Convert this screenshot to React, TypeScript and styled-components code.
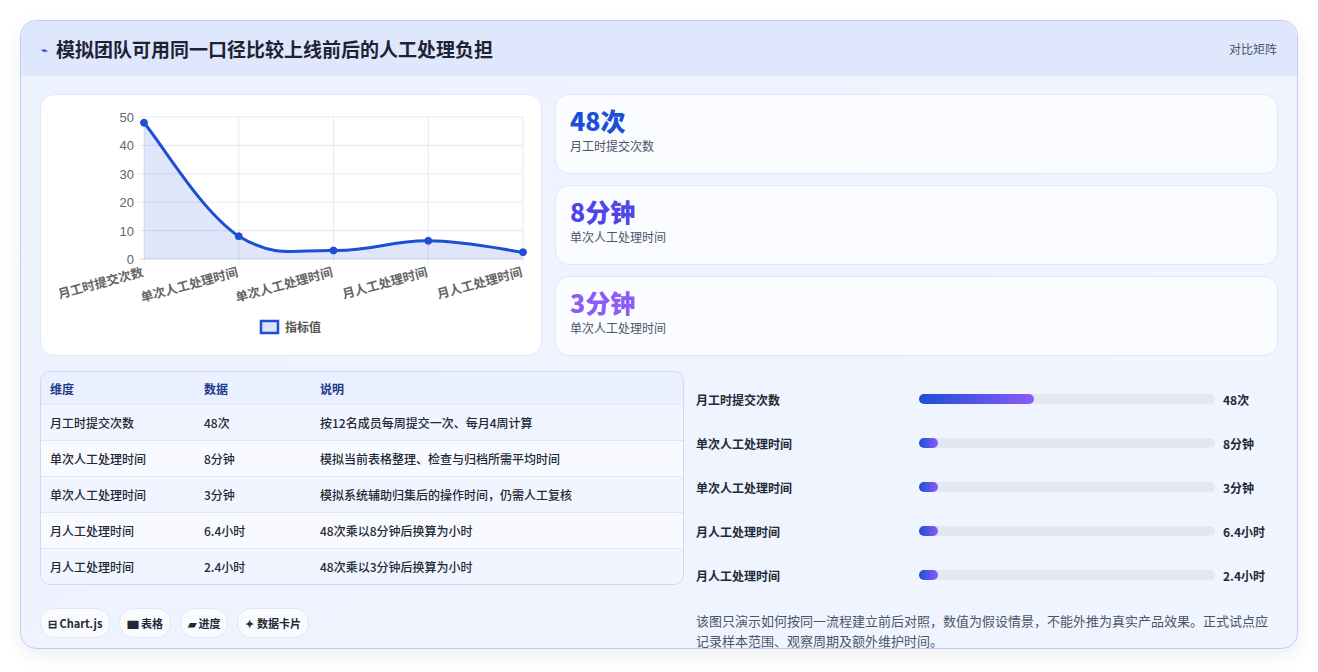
import React from 'react';
import styled, { createGlobalStyle } from 'styled-components';

const Global = createGlobalStyle`
  body { margin: 0; background: #fff; font-family: "Noto Sans CJK SC", "Noto Sans", sans-serif; }
`;

const Page = styled.div`
  padding: 20px 20px 21px 20px;
`;

const Card = styled.div`
  border: 1px solid #c3cdf3;
  border-radius: 16px;
  background: linear-gradient(135deg, #edf2ff 0%, #f1f5ff 100%);
  box-shadow: 0 6px 18px rgba(30, 41, 90, 0.08);
  overflow: hidden;
  height: 629px;
  box-sizing: border-box;
`;

const Header = styled.div`
  height: 55px;
  background: #dfe7fd;
  display: flex;
  align-items: center;
  justify-content: space-between;
  padding: 0 20px;
`;

const Title = styled.h1`
  margin: 0;
  font-size: 19px;
  font-weight: 700;
  color: #1e2333;
  display: flex;
  align-items: center;
  gap: 8px;
`;

const Bolt = styled.span`
  color: #2b50d8;
  font-size: 11px;
`;

const Tag = styled.span`
  font-size: 12px;
  color: #4a5568;
`;

const Body = styled.div`
  padding: 18px 19px 0 19px;
  display: grid;
  grid-template-columns: 502px 1fr;
  column-gap: 13px;
`;

const Panel = styled.div`
  background: #fff;
  border: 1px solid #e3e8f5;
  border-radius: 14px;
  height: 262px;
  box-sizing: border-box;
`;

const Stats = styled.div`
  display: flex;
  flex-direction: column;
  gap: 11px;
`;

const Stat = styled.div`
  background: #fbfcff;
  border: 1px solid #e1e7f8;
  border-radius: 14px;
  height: 80px;
  box-sizing: border-box;
  padding: 10px 14px;
`;

const StatValue = styled.div<{ $c: string }>`
  font-size: 25px;
  font-weight: 800;
  line-height: 30px;
  color: ${p => p.$c};
`;

const StatLabel = styled.div`
  font-size: 12px;
  color: #4a5568;
  margin-top: 2px;
`;

const Lower = styled.div`
  padding: 15px 19px 0 19px;
  display: grid;
  grid-template-columns: 644px 1fr;
  column-gap: 12px;
`;

const Table = styled.div`
  border: 1px solid #cfd8ee;
  border-radius: 10px;
  overflow: hidden;
  background: #f5f8ff;
`;

const Row = styled.div<{ $head?: boolean; $alt?: boolean }>`
  display: grid;
  grid-template-columns: 154px 116px 1fr;
  padding: 0 9px;
  height: ${p => (p.$head ? 32 : 35)}px;
  align-items: center;
  font-size: 12px;
  font-weight: ${p => (p.$head ? 700 : 500)};
  color: ${p => (p.$head ? '#1e3a8a' : '#1f2937')};
  background: ${p => (p.$head ? '#eaf0ff' : p.$alt ? '#f8faff' : '#f1f5ff')};
  border-top: ${p => (p.$head ? 'none' : '1px solid #e0e7f7')};
`;

const Bars = styled.div`
  display: flex;
  flex-direction: column;
  padding-top: 6px;
`;

const BarRow = styled.div`
  display: grid;
  grid-template-columns: 215px 296px 1fr;
  column-gap: 8px;
  align-items: center;
  height: 44px;
  font-size: 12px;
  font-weight: 600;
  color: #1f2937;
`;

const Track = styled.div`
  height: 10px;
  border-radius: 5px;
  background: #e3e7f1;
`;

const Fill = styled.div`
  height: 100%;
  border-radius: 5px;
  background: linear-gradient(90deg, #1d4ed8, #8b5cf6);
`;

const Note = styled.p`
  margin: 14px 0 0;
  font-size: 13px;
  line-height: 20px;
  color: #4a5568;
`;

const Chips = styled.div`
  display: flex;
  gap: 9px;
  margin-top: 23px;
`;

const Chip = styled.span`
  background: #fafbff;
  border: 1px solid #e1e6f3;
  border-radius: 14px;
  padding: 0 7px;
  height: 28px;
  display: flex;
  align-items: center;
  font-size: 11px;
  font-weight: 600;
  color: #1f2937;
`;

const LeftCol = styled.div``;

const vals = [48, 8, 3, 6.4, 2.4];
const labels = ['月工时提交次数', '单次人工处理时间', '单次人工处理时间', '月人工处理时间', '月人工处理时间'];

function Chart() {
  const x0 = 103, w = 379, y0 = 22, h = 142;
  const pts = vals.map((v, i) => [x0 + (w / 4) * i, y0 + h - (v / 50) * h]);
  let d = `M${pts[0][0]},${pts[0][1]}`;
  for (let i = 0; i < pts.length - 1; i++) {
    const p0 = pts[Math.max(0, i - 1)], p1 = pts[i], p2 = pts[i + 1], p3 = pts[Math.min(pts.length - 1, i + 2)];
    const t = 0.4 / 2;
    const c1 = [p1[0] + (p2[0] - p0[0]) * t, Math.min(y0 + h, p1[1] + (p2[1] - p0[1]) * t)];
    const c2 = [p2[0] - (p3[0] - p1[0]) * t, Math.min(y0 + h, p2[1] - (p3[1] - p1[1]) * t)];
    d += ` C${c1[0]},${c1[1]} ${c2[0]},${c2[1]} ${p2[0]},${p2[1]}`;
  }
  const area = `${d} L${x0 + w},${y0 + h} L${x0},${y0 + h} Z`;
  return (
    <svg width="500" height="260" style={{ display: 'block' }} fontFamily='"Liberation Sans", "Noto Sans CJK SC", sans-serif'>
      {[0, 10, 20, 30, 40, 50].map(v => {
        const y = y0 + h - (v / 50) * h;
        return (
          <g key={v}>
            <line x1={x0 - 5} x2={x0 + w} y1={y} y2={y} stroke={v === 0 ? '#cfd6e4' : '#e6e9f0'} />
            <text x={x0 - 10} y={y + 5} textAnchor="end" fontSize="13" fill="#666">{v}</text>
          </g>
        );
      })}
      {pts.map((p, i) => (
        <line key={i} x1={p[0]} x2={p[0]} y1={y0} y2={y0 + h + 5} stroke="#e6e9f0" />
      ))}
      <path d={area} fill="rgba(29,78,216,0.14)" />
      <path d={d} fill="none" stroke="#1d4ed8" strokeWidth="3" />
      {pts.map((p, i) => (
        <circle key={i} cx={p[0]} cy={p[1]} r="3.5" fill="#1d4ed8" stroke="#2850d0" strokeWidth="1" />
      ))}
      {pts.map((p, i) => (
        <text key={i} x={p[0]} y={y0 + h + 17} textAnchor="end" fontSize="12.5" fontWeight="600" fill="#666"
          transform={`rotate(-15 ${p[0]} ${y0 + h + 17})`}>{labels[i]}</text>
      ))}
      <rect x="220" y="226" width="17" height="12" fill="#dbe3f7" stroke="#1d4ed8" strokeWidth="2.5" />
      <text x="244" y="237" fontSize="12" fill="#555" fontWeight="600">指标值</text>
    </svg>
  );
}

const rows = [
  ['月工时提交次数', '48次', '按12名成员每周提交一次、每月4周计算'],
  ['单次人工处理时间', '8分钟', '模拟当前表格整理、检查与归档所需平均时间'],
  ['单次人工处理时间', '3分钟', '模拟系统辅助归集后的操作时间，仍需人工复核'],
  ['月人工处理时间', '6.4小时', '48次乘以8分钟后换算为小时'],
  ['月人工处理时间', '2.4小时', '48次乘以3分钟后换算为小时'],
];

const pct = [39, 6.5, 6.5, 6.5, 6.5];

export default function App() {
  return (
    <Page>
      <Global />
      <Card>
        <Header>
          <Title><Bolt>⌁</Bolt>模拟团队可用同一口径比较上线前后的人工处理负担</Title>
          <Tag>对比矩阵</Tag>
        </Header>
        <Body>
          <Panel><Chart /></Panel>
          <Stats>
            <Stat><StatValue $c="#1d4ed8">48次</StatValue><StatLabel>月工时提交次数</StatLabel></Stat>
            <Stat><StatValue $c="#4f46e5">8分钟</StatValue><StatLabel>单次人工处理时间</StatLabel></Stat>
            <Stat><StatValue $c="#8b5cf6">3分钟</StatValue><StatLabel>单次人工处理时间</StatLabel></Stat>
          </Stats>
        </Body>
        <Lower>
          <LeftCol>
            <Table>
              <Row $head><span>维度</span><span>数据</span><span>说明</span></Row>
              {rows.map((r, i) => (
                <Row key={i} $alt={i % 2 === 1}><span>{r[0]}</span><span>{r[1]}</span><span>{r[2]}</span></Row>
              ))}
            </Table>
            <Chips>
              <Chip>⊟ Chart.js</Chip>
              <Chip>▆ 表格</Chip>
              <Chip>▰ 进度</Chip>
              <Chip>✦ 数据卡片</Chip>
            </Chips>
          </LeftCol>
          <div>
            <Bars>
              {rows.map((r, i) => (
                <BarRow key={i}>
                  <span>{r[0]}</span>
                  <Track><Fill style={{ width: `${pct[i]}%` }} /></Track>
                  <span>{r[1]}</span>
                </BarRow>
              ))}
            </Bars>
            <Note>该图只演示如何按同一流程建立前后对照，数值为假设情景，不能外推为真实产品效果。正式试点应记录样本范围、观察周期及额外维护时间。</Note>
          </div>
        </Lower>
      </Card>
    </Page>
  );
}
